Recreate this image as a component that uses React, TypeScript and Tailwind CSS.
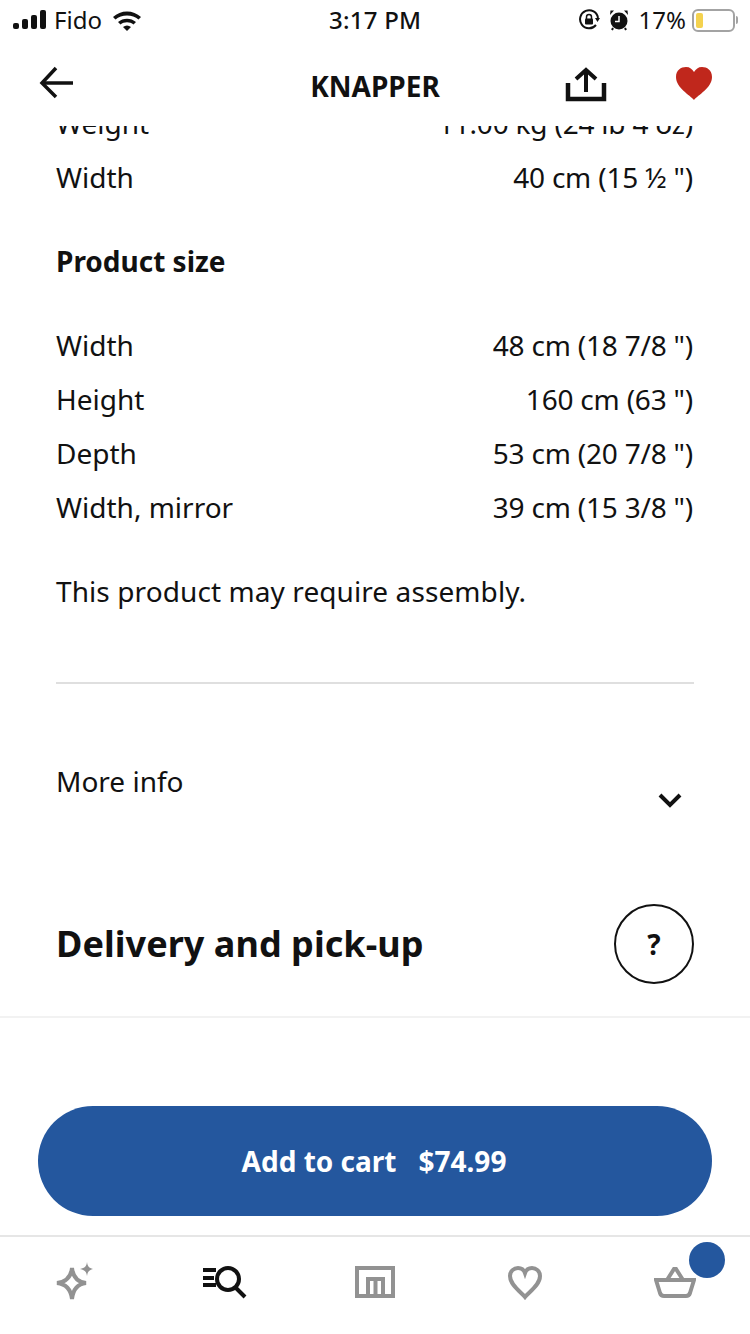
const font = "font-['Noto_Sans',sans-serif]";

function SpecRow({ label, value }: { label: string; value: string }) {
  return (
    <div className="flex h-[54px] items-center justify-between">
      <span>{label}</span>
      <span className="pr-px tracking-[-0.2px]">{value}</span>
    </div>
  );
}

function StatusBar() {
  return (
    <div className="relative flex h-[40px] items-center justify-between pl-[13px] pr-[12px] text-[24px] text-[#111]">
      <div className="flex items-center">
        <svg width="34" height="20" viewBox="0 0 34 20" fill="#111">
          <rect x="0" y="13" width="6" height="6" rx="2" />
          <rect x="9" y="9" width="6" height="10" rx="2" />
          <rect x="18" y="5" width="6" height="14" rx="2" />
          <rect x="27" y="0" width="6" height="19" rx="2" />
        </svg>
        <span className="ml-[7px] leading-none">Fido</span>
        <svg className="ml-[10px]" width="30" height="22" viewBox="0 0 30 22" fill="#111">
          <path d="M1 8 C8.500 0.500 21.500 0.500 29 8 L26.500 10.500 C20.500 5 9.500 5 3.500 10.500 Z" />
          <path d="M6 13 C11 8.500 19 8.500 24 13 L21.500 15.500 C18 12.500 12 12.500 8.500 15.500 Z" />
          <path d="M11 18 C13.500 16 16.500 16 19 18 L15 22 Z" />
        </svg>
      </div>
      <span className="absolute left-[329px] top-[2px] text-[24px] font-medium tracking-[0.25px]">3:17 PM</span>
      <div className="flex items-center">
        <svg width="22" height="22" viewBox="0 0 22 22" fill="none">
          <path d="M18 16 A9 9 0 1 1 20 9" stroke="#111" strokeWidth="2" />
          <path d="M17 9 L22 9 L19.500 13 Z" fill="#111" />
          <rect x="7" y="9.500" width="8" height="6" rx="1" fill="#111" />
          <path d="M8.500 10 V8 a2.500 2.500 0 0 1 5 0 V10" stroke="#111" strokeWidth="1.500" />
        </svg>
        <svg className="ml-[9px]" width="20" height="22" viewBox="0 0 20 22" fill="#111">
          <circle cx="10" cy="12" r="8.500" />
          <path d="M10 7 V12.500 H6" stroke="#fff" strokeWidth="1.500" fill="none" />
          <path d="M1 6 L5 1.500 L1.500 1.500 Z M19 6 L15 1.500 L18.500 1.500 Z" />
          <path d="M4 19 L3 21 M16 19 L17 21" stroke="#111" strokeWidth="2" />
        </svg>
        <span className="ml-[10px] leading-none">17%</span>
        <div className="ml-[6px] flex h-[23px] w-[43px] items-center rounded-[6px] border-2 border-[#a3a3a3] p-[2px]">
          <div className="h-full w-[7px] rounded-[2px] bg-[#f4d24f]" />
        </div>
        <div className="ml-[1px] h-[8px] w-[2px] rounded-r-sm bg-[#a3a3a3]" />
      </div>
    </div>
  );
}

function NavBar() {
  return (
    <div className="relative flex h-[86px] items-center justify-center bg-white">
      <svg className="absolute left-[38px] top-[24px]" width="38" height="36" viewBox="0 0 38 36" fill="none" stroke="#111" strokeWidth="3.500">
        <path d="M35 19 H5" />
        <path d="M18 4 L4 19 L18 33" />
      </svg>
      <span className="mt-[6px] text-[28px] font-bold text-[#111]">KNAPPER</span>
      <svg className="absolute left-[564px] top-[26px]" width="44" height="38" viewBox="0 0 44 38" fill="none" stroke="#111" strokeWidth="4">
        <path d="M22 26 V6" />
        <path d="M12 13 L22 4 L32 13" />
        <path d="M4 17 V33 H40 V17" strokeWidth="4.500" />
      </svg>
      <svg className="absolute left-[676px] top-[27px]" width="36" height="33" viewBox="0 0 36 33" fill="#c0271c">
        <path d="M18 33 C14 28 0 21 0 10 C0 3 5 0 10 0 C14 0 16 2 18 5 C20 2 22 0 26 0 C31 0 36 3 36 10 C36 21 22 28 18 33 Z" />
      </svg>
    </div>
  );
}

function BottomTabs() {
  return (
    <div className="relative flex h-[99px] border-t-2 border-[#e6e6e6] bg-white">
      <svg className="absolute left-[54px] top-[25px]" width="42" height="42" viewBox="0 0 42 42" fill="none">
        <path d="M18 6 C19 15 23 20 32 21 C23 22 19 28 18 37 C17 28 12 22 3 21 C12 20 17 15 18 6 Z" stroke="#929292" strokeWidth="4" />
        <path d="M33 0 C33.500 4 35 6 39 7 C35 8 33.500 10 33 14 C32.500 10 31 8 26 7 C31 6 32.500 4 33 0 Z" fill="#929292" />
      </svg>
      <svg className="absolute left-[202px] top-[29px]" width="46" height="34" viewBox="0 0 46 34" fill="none" stroke="#111">
        <path d="M1 4 H14 M1 12 H12 M1 19 H14" strokeWidth="4" />
        <circle cx="26" cy="13" r="11" strokeWidth="4" />
        <path d="M33 21 L43 31" strokeWidth="4" />
      </svg>
      <svg className="absolute left-[354px] top-[29px]" width="42" height="34" viewBox="0 0 42 34" fill="none" stroke="#929292" strokeWidth="4">
        <path d="M3 30 V2 H39 V30 Z" />
        <path d="M14 30 V13 H29 V30 M21.500 13 V30" />
      </svg>
      <svg className="absolute left-[506px] top-[28px]" width="38" height="36" viewBox="0 0 38 36" fill="none" stroke="#929292" strokeWidth="4">
        <path d="M19 32 C15 27 4 20 4 11 C4 6 8 3 12 3 C15 3 18 5 19 8 C20 5 23 3 26 3 C30 3 34 6 34 11 C34 20 23 27 19 32 Z" />
      </svg>
      <svg className="absolute left-[654px] top-[29px]" width="42" height="34" viewBox="0 0 42 34" fill="none" stroke="#929292" strokeWidth="4">
        <path d="M2 14 H40 L36 27 Q35 30 32 30 H10 Q7 30 6 27 Z" />
        <path d="M13 14 L20 3 H22 L29 14" />
      </svg>
      <div className="absolute left-[689px] top-[5px] h-[36px] w-[36px] rounded-full bg-[#24579e]" />
    </div>
  );
}

export default function App() {
  return (
    <div className={`${font} flex h-[1334px] w-[750px] flex-col overflow-hidden bg-white text-[28px] text-[#111]`}>
      <StatusBar />
      <NavBar />
      <div className="flex-1 overflow-hidden">
        <div className="-mt-[30px] px-[56px]">
          <SpecRow label="Weight" value={'11.00 kg (24 lb 4 oz)'} />
          <SpecRow label="Width" value={'40 cm (15 ½ ")'} />
          <div className="mt-[30px] flex h-[54px] items-center font-bold">Product size</div>
          <div className="mt-[30px]">
            <SpecRow label="Width" value={'48 cm (18 7/8 ")'} />
            <SpecRow label="Height" value={'160 cm (63 ")'} />
            <SpecRow label="Depth" value={'53 cm (20 7/8 ")'} />
            <SpecRow label="Width, mirror" value={'39 cm (15 3/8 ")'} />
          </div>
          <div className="mt-[30px] flex h-[54px] items-center tracking-[0.09px]">This product may require assembly.</div>
          <div className="mt-[64px] h-[2px] bg-[#dfdfdf]" />
          <div className="relative mt-[70px] flex h-[54px] items-center">
            <span>More info</span>
            <svg className="absolute left-[602px] top-[39px]" width="24" height="16" viewBox="0 0 24 16" fill="none" stroke="#111" strokeWidth="4">
              <path d="M2 2 L12 12 L22 2" />
            </svg>
          </div>
        </div>
        <div className="mt-[96px] flex items-center justify-between px-[56px]">
          <span className="text-[36px] font-bold tracking-[0.05px]">Delivery and pick-up</span>
          <div className="flex h-[80px] w-[80px] items-center justify-center rounded-full border-2 border-[#111] text-[28px] font-bold">?</div>
        </div>
        <div className="mt-[32px] h-[2px] bg-[#f2f2f2]" />
        <div className="mx-[38px] mt-[88px] flex h-[110px] items-center justify-center gap-[22px] rounded-[55px] bg-[#24579e] pr-[2px] font-bold text-white">
          <span>Add to cart</span>
          <span>$74.99</span>
        </div>
      </div>
      <BottomTabs />
    </div>
  );
}
